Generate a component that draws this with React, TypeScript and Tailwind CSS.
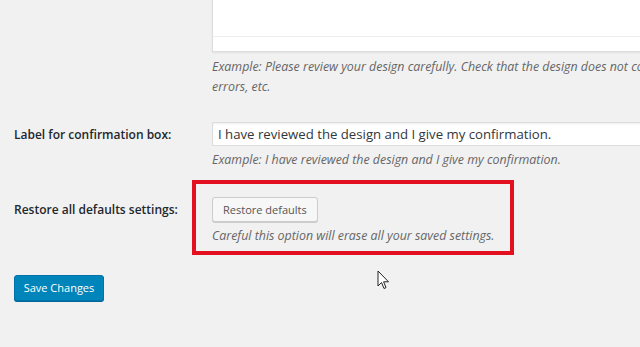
import React from 'react';

const font = { fontFamily: '"Open Sans", "Noto Sans", sans-serif' };

export default function App() {
  return (
    <div className="w-[640px] h-[347px] overflow-hidden bg-[#f1f1f1] pl-[14px]" style={font}>
      {/* textarea section (top cut off) */}
      <div className="grid grid-cols-[198px_1fr]">
        <div />
        <div>
          <div className="w-[480px] h-[52px] bg-white border-x border-b border-[#ddd] shadow-[0_1px_2px_rgba(0,0,0,0.07)]">
            <div className="h-[37px] border-b border-[#eee]" />
          </div>
          <p className="mt-[5px] text-[12.4px] italic text-[#666] leading-[20px] whitespace-nowrap">
            Example: Please review your design carefully. Check that the design does not contain any typos or spelling
            <br />
            errors, etc.
          </p>
        </div>
      </div>

      <div className="mt-[25px] grid grid-cols-[198px_1fr]">
        <div className="pt-[3px] text-[12px] font-semibold text-[#23282d] leading-[20px]">
          Label for confirmation box:
        </div>
        <div>
          <div className="w-[480px] h-[24px] bg-white border border-[#ddd] shadow-[inset_0_1px_2px_rgba(0,0,0,0.07)] px-[5px] text-[13.2px] text-[#32373c] leading-[22px] whitespace-nowrap">
            I have reviewed the design and I give my confirmation.
          </div>
          <p className="mt-[4px] text-[12.4px] italic text-[#666] leading-[20px]">
            Example: I have reviewed the design and I give my confirmation.
          </p>
        </div>
      </div>

      <div className="mt-[10px] grid grid-cols-[178px_1fr]">
        <div className="pt-[20px] text-[12px] font-semibold text-[#23282d] leading-[20px]">
          Restore all defaults settings:
        </div>
        <div className="w-[322px] h-[75px] border-4 border-[#e3111f] pl-[16px] pt-[12px]">
          <button className="h-[25px] px-[10px] bg-[#f7f7f7] border border-[#ccc] rounded-[3px] shadow-[0_1px_0_#ccc] text-[11px] text-[#555] leading-[23px]">
            Restore defaults
          </button>
          <p className="mt-[4px] text-[12.4px] italic text-[#666] leading-[20px] whitespace-nowrap">
            Careful this option will erase all your saved settings.
          </p>
        </div>
      </div>

      <div className="mt-[20px] flex">
        <button className="h-[26px] w-[90px] bg-[#0085ba] border border-[#0073aa] rounded-[3px] shadow-[0_1px_0_#006799] text-[11px] text-white leading-[24px]">
          Save Changes
        </button>
        <svg className="ml-[273px] -mt-[5px]" width="13" height="21" viewBox="0 0 13 21">
          <path d="M1 1 L1 16 L4.5 12.5 L7 18.5 L9 17.6 L6.6 11.8 L11.5 11.8 Z" fill="white" stroke="#222" strokeWidth="1" strokeLinejoin="round" />
        </svg>
      </div>
    </div>
  );
}
